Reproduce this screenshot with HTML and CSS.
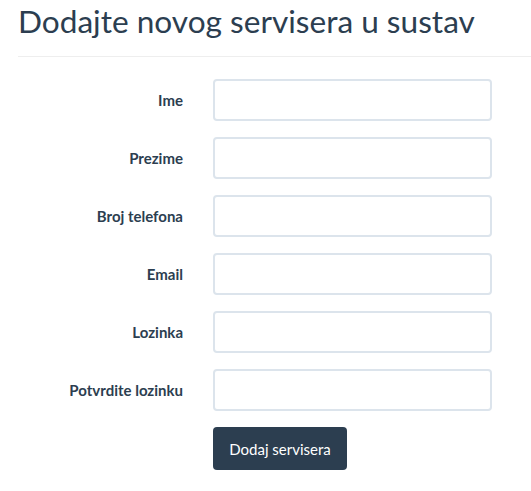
FILE: index.html
```html
<!DOCTYPE html>
<html lang="hr">
<head>
<meta charset="utf-8">
<title>Dodajte novog servisera</title>
<link rel="stylesheet" href="styles.css">
</head>
<body>
<div class="page">
  <h1 class="title">Dodajte novog servisera u sustav</h1>
  <hr class="divider">
  <form class="form">
    <div class="row"><label class="label" for="ime">Ime</label><input class="input" id="ime" type="text"></div>
    <div class="row"><label class="label" for="prezime">Prezime</label><input class="input" id="prezime" type="text"></div>
    <div class="row"><label class="label" for="tel">Broj telefona</label><input class="input" id="tel" type="text"></div>
    <div class="row"><label class="label" for="email">Email</label><input class="input" id="email" type="text"></div>
    <div class="row"><label class="label" for="loz">Lozinka</label><input class="input" id="loz" type="password"></div>
    <div class="row"><label class="label" for="loz2">Potvrdite lozinku</label><input class="input" id="loz2" type="password"></div>
    <div class="row"><span></span><button class="btn" type="button">Dodaj servisera</button></div>
  </form>
</div>
</body>
</html>
```
FILE: styles.css
```css
html, body {
  margin: 0;
  padding: 0;
  background: #fff;
}
body {
  font-family: Lato, "Open Sans", sans-serif;
  color: #2c3e50;
}
.page {
  padding-left: 18px;
}
.title {
  margin: 0;
  padding-top: 0;
  font-size: 31.6px;
  font-weight: 400;
  line-height: 42px;
  color: #2c3e50;
}
.divider {
  margin: 14px 0 0 0;
  border: 0;
  border-top: 1px solid #eeeeee;
  height: 0;
}
.form {
  display: flex;
  flex-direction: column;
  gap: 16px;
  padding-top: 22px;
}
.row {
  display: grid;
  grid-template-columns: 165px 279px;
  column-gap: 30px;
  align-items: center;
}
.label {
  text-align: right;
  font-weight: 700;
  font-size: 15px;
}
.input {
  box-sizing: border-box;
  height: 42px;
  width: 279px;
  border: 2px solid #dce4ec;
  border-radius: 4px;
  background: #fff;
  padding: 0 12px;
  font: inherit;
}
.btn {
  justify-self: start;
  box-sizing: border-box;
  height: 43px;
  width: 134px;
  border: 0;
  border-radius: 4px;
  background: #2c3e50;
  color: #fff;
  font-family: Lato, sans-serif;
  font-size: 15px;
  padding: 0;
}
```
